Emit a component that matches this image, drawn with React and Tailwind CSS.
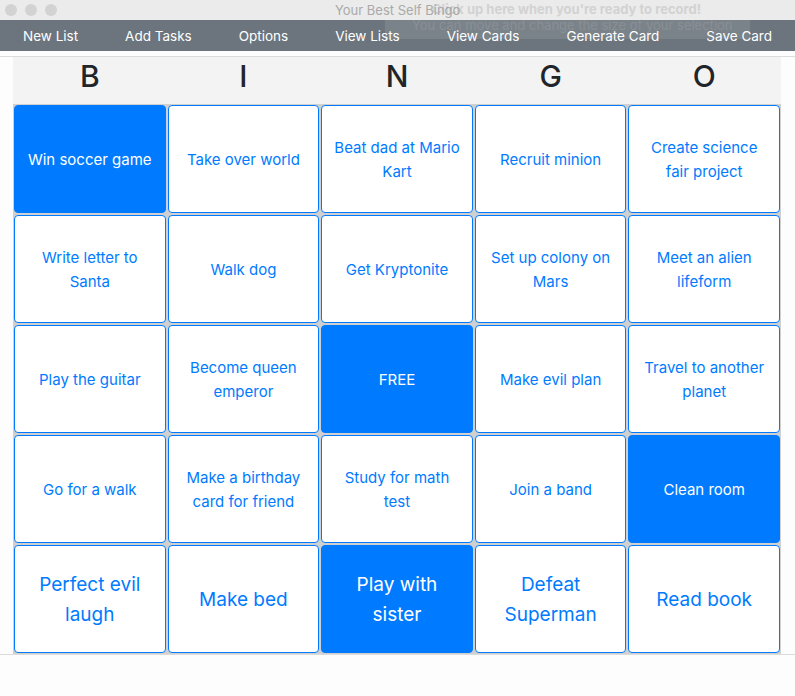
import React from 'react';

const menu = ['New List', 'Add Tasks', 'Options', 'View Lists', 'View Cards', 'Generate Card', 'Save Card'];

const cells = [
  ['Win soccer game', true], ['Take over world'], ['Beat dad at Mario Kart'], ['Recruit minion'], ['Create science fair project'],
  ['Write letter to Santa'], ['Walk dog'], ['Get Kryptonite'], ['Set up colony on Mars'], ['Meet an alien lifeform'],
  ['Play the guitar'], ['Become queen emperor'], ['FREE', true], ['Make evil plan'], ['Travel to another planet'],
  ['Go for a walk'], ['Make a birthday card for friend'], ['Study for math test'], ['Join a band'], ['Clean room', true],
  ['Perfect evil laugh'], ['Make bed'], ['Play with sister', true], ['Defeat Superman'], ['Read book'],
];

const App = () => {
  return (
    <div className="w-[795px] h-[696px] bg-[#fdfdfd] overflow-hidden relative" style={{ fontFamily: 'Inter, "Noto Sans", sans-serif' }}>
      {/* Window title bar */}
      <div className="h-[20px] bg-[#ebebeb] flex items-center relative">
        <div className="flex gap-[8px] pl-[5px]">
          <span className="w-[12px] h-[12px] rounded-full bg-[#d2d2d2]" />
          <span className="w-[12px] h-[12px] rounded-full bg-[#d2d2d2]" />
          <span className="w-[12px] h-[12px] rounded-full bg-[#d2d2d2]" />
        </div>
        <div className="absolute left-[335px] top-[1px] text-[13px] text-[#a9a9a9]">Your Best Self Bingo</div>
      </div>

      {/* Nav */}
      <div className="h-[31px] bg-[#6c757d] flex items-center justify-between px-[23px] pt-[2px] text-[13.5px] text-white">
        {menu.map((m) => (
          <span key={m}>{m}</span>
        ))}
      </div>

      {/* recorder overlay */}
      <div className="absolute left-[432px] top-[0px] text-[13px] font-bold text-[#9a9a9a] opacity-30 pointer-events-none">Click up here when you're ready to record!</div>
      <div className="absolute left-[385px] top-[20px] w-[365px] h-[19px] bg-white/10 pointer-events-none" />
      <div className="absolute left-[412px] top-[16px] text-[13px] text-[#c0c0c0] opacity-20 pointer-events-none">You can move and change the size of your selection</div>

      <div className="h-[5px]" />
      <div className="h-[1px] bg-[#dcdcdc]" />

      {/* Board */}
      <div className="ml-[13px] w-[768px]">
        <div className="h-[47px] bg-[#f3f3f3] grid grid-cols-5 items-center pb-[9px] text-[30px] font-medium text-[#212529]">
          {['B', 'I', 'N', 'G', 'O'].map((l) => (
            <div key={l} className="text-center leading-none">{l}</div>
          ))}
        </div>
        <div className="grid grid-cols-5 gap-[2px] p-[1px] bg-[#d0d0d0]">
          {cells.map(([t, on], i) => (
            <div
              key={i}
              className={`h-[108px] rounded-[4px] border border-[#007bff] flex items-center justify-center text-center px-[9px] pt-[2px] ${
                on ? 'bg-[#007bff] text-white' : 'bg-white text-[#007bff]'
              } ${i >= 20 ? 'text-[19px] leading-[30px]' : 'text-[15px] leading-[24px]'}`}
            >
              {t}
            </div>
          ))}
        </div>
      </div>
      <div className="h-[1px] bg-[#dcdcdc]" />
    </div>
  );
};

export default App;
